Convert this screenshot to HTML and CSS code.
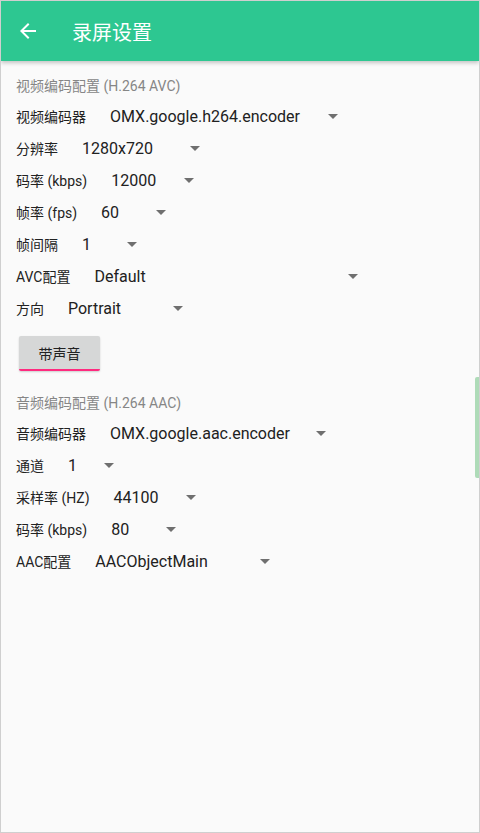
FILE: index.html
```html
<!DOCTYPE html>
<html lang="zh">
<head>
<meta charset="utf-8">
<title>录屏设置</title>
<link rel="stylesheet" href="styles.css">
</head>
<body>
<div class="screen">
  <header class="toolbar">
    <svg class="back" viewBox="0 0 24 24" width="24" height="24"><path fill="#fff" d="M20 11H7.83l5.59-5.59L12 4l-8 8 8 8 1.41-1.41L7.83 13H20v-2z"/></svg>
    <h1 class="title">录屏设置</h1>
  </header>
  <main class="content">
    <div class="section-title">视频编码配置 (H.264 AVC)</div>
    <div class="row"><span class="label">视频编码器</span><span class="spinner w228"><span class="value">OMX.google.h264.encoder</span><i class="caret"></i></span></div>
    <div class="row"><span class="label">分辨率</span><span class="spinner w118"><span class="value">1280x720</span><i class="caret"></i></span></div>
    <div class="row"><span class="label">码率 (kbps)</span><span class="spinner w83"><span class="value">12000</span><i class="caret"></i></span></div>
    <div class="row"><span class="label">帧率 (fps)</span><span class="spinner w65"><span class="value">60</span><i class="caret"></i></span></div>
    <div class="row"><span class="label">帧间隔</span><span class="spinner w55"><span class="value">1</span><i class="caret"></i></span></div>
    <div class="row"><span class="label">AVC配置</span><span class="spinner w264"><span class="value">Default</span><i class="caret"></i></span></div>
    <div class="row"><span class="label">方向</span><span class="spinner w115"><span class="value">Portrait</span><i class="caret"></i></span></div>
    <button class="toggle">带声音</button>
    <div class="section-title second">音频编码配置 (H.264 AAC)</div>
    <div class="row"><span class="label">音频编码器</span><span class="spinner w216"><span class="value">OMX.google.aac.encoder</span><i class="caret"></i></span></div>
    <div class="row"><span class="label">通道</span><span class="spinner w46"><span class="value">1</span><i class="caret"></i></span></div>
    <div class="row"><span class="label">采样率 (HZ)</span><span class="spinner w82"><span class="value">44100</span><i class="caret"></i></span></div>
    <div class="row"><span class="label">码率 (kbps)</span><span class="spinner w65"><span class="value">80</span><i class="caret"></i></span></div>
    <div class="row"><span class="label">AAC配置</span><span class="spinner w175"><span class="value">AACObjectMain</span><i class="caret"></i></span></div>
  </main>
  <div class="scrollbar"></div>
</div>
</body>
</html>
```
FILE: styles.css
```css
* { box-sizing: border-box; }
html, body { margin: 0; padding: 0; }
body {
  width: 480px;
  height: 833px;
  font-family: Roboto, "Noto Sans CJK SC", sans-serif;
  background: #fafafa;
  color: #212121;
}
.screen {
  position: relative;
  width: 480px;
  height: 833px;
  border: 1px solid #cfcfcf;
  background: #fafafa;
  overflow: hidden;
}
.toolbar {
  height: 60px;
  background: #2dc791;
  display: flex;
  align-items: center;
  box-shadow: 0 2px 4px rgba(0,0,0,0.22);
  position: relative;
  z-index: 1;
}
.back {
  margin-left: 15px;
  flex: none;
}
.title {
  margin: 0 0 0 32px;
  font-size: 20px;
  font-weight: 400;
  color: #fff;
  line-height: 1;
  padding-top: 4px;
}
.content {
  padding: 14px 0 0 15px;
}
.section-title {
  font-size: 14px;
  line-height: 22px;
  height: 22px;
  color: #868686;
  margin-bottom: 3px;
}
.section-title.second {
  margin-top: 21px;
}
.row {
  display: flex;
  align-items: center;
  height: 32px;
}
.label {
  font-size: 14px;
  color: #222;
  white-space: nowrap;
}
.spinner {
  display: flex;
  align-items: center;
  justify-content: space-between;
  margin-left: 24px;
}
.value {
  font-size: 16px;
  color: #212121;
  white-space: nowrap;
}
.caret {
  width: 0;
  height: 0;
  border-left: 5px solid transparent;
  border-right: 5px solid transparent;
  border-top: 5px solid #6f6f6f;
  flex: none;
}
.w228 { width: 228px; }
.w118 { width: 118px; }
.w83 { width: 83px; }
.w65 { width: 65px; }
.w55 { width: 55px; }
.w264 { width: 264px; }
.w115 { width: 115px; }
.w216 { width: 216px; }
.w46 { width: 46px; }
.w82 { width: 82px; }
.w175 { width: 175px; }
.toggle {
  display: block;
  margin: 12px 0 0 3px;
  width: 81px;
  height: 35px;
  border: none;
  border-radius: 2px;
  background: #d6d7d7;
  border-bottom: 2px solid #ff2a7f;
  box-shadow: 0 1px 2px rgba(0,0,0,0.18);
  font-family: Roboto, "Noto Sans CJK SC", sans-serif;
  font-size: 14px;
  color: #222;
  padding: 0;
}
.scrollbar {
  position: absolute;
  right: 0;
  top: 376px;
  width: 4px;
  height: 101px;
  background: #aedbb8;
  border-radius: 2px 0 0 2px;
}
```
